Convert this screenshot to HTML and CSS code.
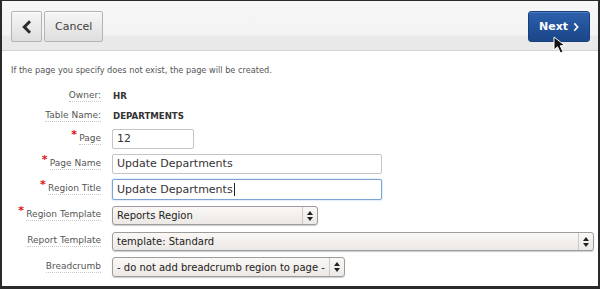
FILE: index.html
```html
<!DOCTYPE html>
<html lang="en">
<head>
    <meta charset="UTF-8">
    <meta name="viewport" content="width=device-width, initial-scale=1.0">
    <title>Create Page</title>
    <link rel="stylesheet" href="styles.css">
</head>
<body>
    <div class="wizard">
        <div class="toolbar">
            <div class="toolbar-left">
                <button class="btn btn-icon" type="button" aria-label="Previous">
                    <svg width="12" height="14" viewBox="0 0 12 14"><path d="M9 1.2 L3.3 7 L9 12.8" fill="none" stroke="#2b2b2b" stroke-width="3"/></svg>
                </button>
                <button class="btn" type="button">Cancel</button>
            </div>
            <button class="btn btn-next" type="button">Next
                <svg width="9" height="14" viewBox="0 0 9 14"><path d="M2 1.5 L7 7 L2 12.5" fill="none" stroke="#fff" stroke-width="2.4"/></svg>
            </button>
            <svg class="cursor" width="16" height="18" viewBox="0 0 16 18"><path d="M1 1 L1 14 L4.5 10.8 L7.5 17 L10 15.8 L7.2 9.8 L12 9.6 Z" fill="#111" stroke="#fff" stroke-width="1"/></svg>
        </div>

        <p class="help">If the page you specify does not exist, the page will be created.</p>

        <div class="form">
            <div class="row row-sm">
                <span class="label">Owner:</span>
                <span class="value">HR</span>
            </div>
            <div class="row row-sm">
                <span class="label">Table Name:</span>
                <span class="value">DEPARTMENTS</span>
            </div>
            <div class="row row-md">
                <span class="label"><i class="req">*</i>Page</span>
                <input class="field field-short" value="12">
            </div>
            <div class="row row-md">
                <span class="label"><i class="req">*</i>Page Name</span>
                <input class="field field-wide" value="Update Departments">
            </div>
            <div class="row">
                <span class="label"><i class="req">*</i>Region Title</span>
                <div class="field field-wide focused">Update Departments<span class="caret"></span></div>
            </div>
            <div class="row">
                <span class="label"><i class="req">*</i>Region Template</span>
                <div class="select sel-region"><span class="select-text">Reports Region</span><span class="arrows"></span></div>
            </div>
            <div class="row">
                <span class="label">Report Template</span>
                <div class="select sel-full"><span class="select-text">template: Standard</span><span class="arrows"></span></div>
            </div>
            <div class="row">
                <span class="label">Breadcrumb</span>
                <div class="select sel-auto"><span class="select-text">- do not add breadcrumb region to page -</span><span class="arrows"></span></div>
            </div>
        </div>
    </div>
</body>
</html>
```

FILE: styles.css
```css
* {
    margin: 0;
    padding: 0;
    box-sizing: border-box;
}

body {
    font-family: "DejaVu Sans", sans-serif;
    background: #fff;
    color: #333;
}

.wizard {
    width: 600px;
    height: 289px;
    border-top: 1px solid #2a2a2a;
    border-left: 2px solid #2a2a2a;
    border-right: 2px solid #2a2a2a;
    border-bottom: 3px solid #2a2a2a;
    position: relative;
    overflow: hidden;
}

/* toolbar */
.toolbar {
    height: 50px;
    display: flex;
    justify-content: space-between;
    align-items: flex-start;
    padding: 10px 8px 0 9px;
    background: linear-gradient(#f7f7f7 0, #f3f3f3 34px, #eaeaea 35px, #e9e9e9 49px);
    border-bottom: 1px solid #d2d2d2;
    position: relative;
}

.toolbar-left {
    display: flex;
    gap: 2px;
}

.btn {
    height: 31px;
    padding: 0 10px;
    border: 1px solid #b4b4b4;
    border-radius: 2px;
    background: linear-gradient(#f6f6f6, #dedede);
    font-family: "DejaVu Sans", sans-serif;
    font-size: 11px;
    color: #404040;
    display: flex;
    align-items: center;
    justify-content: center;
    box-shadow: inset 0 1px 0 #fff;
}

.btn-icon {
    width: 31px;
    padding: 0;
}

.btn-next {
    width: 62px;
    gap: 5px;
    border-color: #17407e;
    border-radius: 3px;
    background: linear-gradient(#2d60ad, #1b4687);
    color: #fff;
    font-weight: bold;
    box-shadow: inset 0 1px 0 #4f7cc0;
}

.cursor {
    position: absolute;
    left: 551px;
    top: 35px;
}

/* help text */
.help {
    font-size: 8.2px;
    color: #555;
    line-height: 18px;
    margin: 10px 0 7px 9px;
}

/* form */
.form {
    display: flex;
    flex-direction: column;
}

.row {
    height: 26px;
    display: grid;
    grid-template-columns: 99px 1fr;
    column-gap: 11px;
    align-items: center;
    justify-items: start;
}

.row-sm {
    height: 20px;
}

.row-md {
    height: 25px;
}

.label {
    justify-self: end;
    font-size: 9px;
    color: #555;
    padding-bottom: 1px;
    border-bottom: 1px dotted #c8c8c8;
    position: relative;
}

.req {
    position: absolute;
    left: -8px;
    top: -5px;
    color: #e01010;
    font-style: normal;
    font-size: 11px;
    font-weight: bold;
}

.value {
    font-size: 8.6px;
    font-weight: bold;
    color: #333;
    padding-left: 1px;
}

.field {
    height: 20px;
    border: 1px solid #c4c4c4;
    border-radius: 2px;
    background: #fff;
    font-family: "DejaVu Sans", sans-serif;
    font-size: 11px;
    color: #333;
    padding: 0 4px;
    display: flex;
    align-items: center;
}

.field-short {
    width: 82px;
}

.field-wide {
    width: 270px;
}

.focused {
    height: 21px;
    border-color: #7aa3d6;
    box-shadow: 0 0 2px #9cbde6;
}

.caret {
    width: 1px;
    height: 13px;
    background: #222;
    margin-left: 1px;
}

.select {
    height: 19px;
    display: flex;
    align-items: stretch;
    border: 1px solid #9c9c9c;
    border-radius: 3px;
    background: linear-gradient(#faf7f5, #ebe8e5);
    font-size: 10px;
    color: #222;
    box-shadow: 0 1px 1px #ccc;
}

.sel-region {
    width: 206px;
}

.sel-full {
    width: 482px;
}

.sel-auto {
    height: 20px;
}

.select-text {
    flex: 1;
    padding: 0 4px;
    display: flex;
    align-items: center;
    white-space: nowrap;
}

.arrows {
    width: 15px;
    border-left: 1px solid #c9c9c9;
    position: relative;
}

.arrows::before,
.arrows::after {
    content: "";
    position: absolute;
    left: 4px;
    border-left: 3px solid transparent;
    border-right: 3px solid transparent;
}

.arrows::before {
    top: 4px;
    border-bottom: 4px solid #222;
}

.arrows::after {
    top: 10px;
    border-top: 4px solid #222;
}
```
